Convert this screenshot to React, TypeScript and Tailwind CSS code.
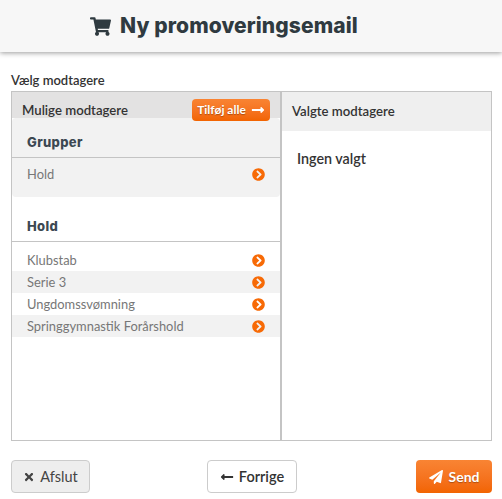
import React from 'react';
import { FaShoppingCart, FaTimes, FaLongArrowAltLeft, FaLongArrowAltRight, FaPaperPlane, FaChevronCircleRight } from 'react-icons/fa';

const Row = ({ label, shaded }: { label: string; shaded?: boolean }) => (
  <div className={`flex h-[22px] items-center justify-between px-[15px] text-[12.9px] text-[#777] ${shaded ? 'bg-[#f2f2f2]' : ''}`}>
    <span className="pt-[2px]">{label}</span>
    <FaChevronCircleRight className="text-[13px] text-[#f76a06]" />
  </div>
);

const SectionTitle = ({ title }: { title: string }) => (
  <div className="flex h-[31px] items-center border-b border-[#c4c4c4] pt-[2px] pl-[15px] font-['Inter',sans-serif] text-[13px] font-extrabold tracking-[0.35px] text-[#3c4852]">
    {title}
  </div>
);

export default function App() {
  return (
    <div className="flex h-[499px] w-[502px] flex-col overflow-hidden bg-white font-['Lato',sans-serif]">
      <div className="flex h-[52px] shrink-0 items-center gap-[9px] bg-[#f7f7f7] pl-[90px] shadow-[0_1px_5px_rgba(0,0,0,0.4)]">
        <FaShoppingCart className="text-[21px] text-[#2f3a40]" />
        <h1 className="font-['Inter',sans-serif] text-[21px] font-extrabold tracking-[0.1px] text-[#2f3a40]">Ny promoveringsemail</h1>
      </div>

      <div className="mt-[21px] pl-[11px] text-[13px] leading-[15px] font-semibold text-[#333]">Vælg modtagere</div>

      <div className="mx-[11px] mt-[3px] flex h-[350px] w-[481px] border border-[#c4c4c4]">
        <div className="flex w-[268px] flex-col">
          <div className="relative h-[26px] shrink-0 bg-[#e3e2e2] pt-[10px] pl-[10px] text-[13.2px] leading-[16px] font-semibold text-[#333]">
            Mulige modtagere
            <button className="absolute top-[7px] right-[10px] flex h-[22px] w-[78px] items-center justify-center gap-[5px] rounded-[4px] bg-gradient-to-b from-[#f98433] to-[#f26400] text-[12px] font-bold text-white [text-shadow:0_1px_1px_rgba(0,0,0,0.3)]">
              Tilføj alle <FaLongArrowAltRight className="text-[14px]" />
            </button>
          </div>
          <div className="h-[79px] rounded-[4px] bg-[#f2f2f2]">
            <div className="h-[9px]" />
            <SectionTitle title="Grupper" />
            <div className="mt-[5px]">
              <Row label="Hold" />
            </div>
          </div>
          <div className="mt-[14px]">
            <SectionTitle title="Hold" />
            <div className="mt-[7px]">
              <Row label="Klubstab" />
              <Row label="Serie 3" shaded />
              <Row label="Ungdomssvømning" />
              <Row label="Springgymnastik Forårshold" shaded />
            </div>
          </div>
        </div>

        <div className="w-[2px] shrink-0 bg-[#c4c4c4]" />

        <div className="flex-1">
          <div className="flex h-[39px] items-center bg-[#efefef] pl-[10px] text-[13.2px] font-semibold text-[#333]">Valgte modtagere</div>
          <div className="pt-[19px] pl-[15px] text-[14.3px] leading-[18px] font-semibold text-[#333]">Ingen valgt</div>
        </div>
      </div>

      <div className="mt-[19px] ml-[11px] flex w-[481px] items-center">
        <button className="flex h-[33px] w-[79px] items-center justify-center gap-[5px] rounded-[4px] border border-[#ccc] bg-[#eee] text-[14.5px] text-[#444]">
          <FaTimes className="text-[12px]" /> Afslut
        </button>
        <button className="ml-[117px] flex h-[33px] w-[90px] items-center justify-center gap-[5px] rounded-[4px] border border-[#ccc] bg-white text-[14.5px] font-semibold text-[#333]">
          <FaLongArrowAltLeft className="text-[14px]" /> Forrige
        </button>
        <button className="ml-auto flex h-[33px] w-[76px] items-center justify-center gap-[6px] rounded-[4px] bg-gradient-to-b from-[#f98433] to-[#f26400] text-[14px] font-bold text-white [text-shadow:0_1px_1px_rgba(0,0,0,0.3)]">
          <FaPaperPlane className="text-[14px]" /> Send
        </button>
      </div>
    </div>
  );
}
